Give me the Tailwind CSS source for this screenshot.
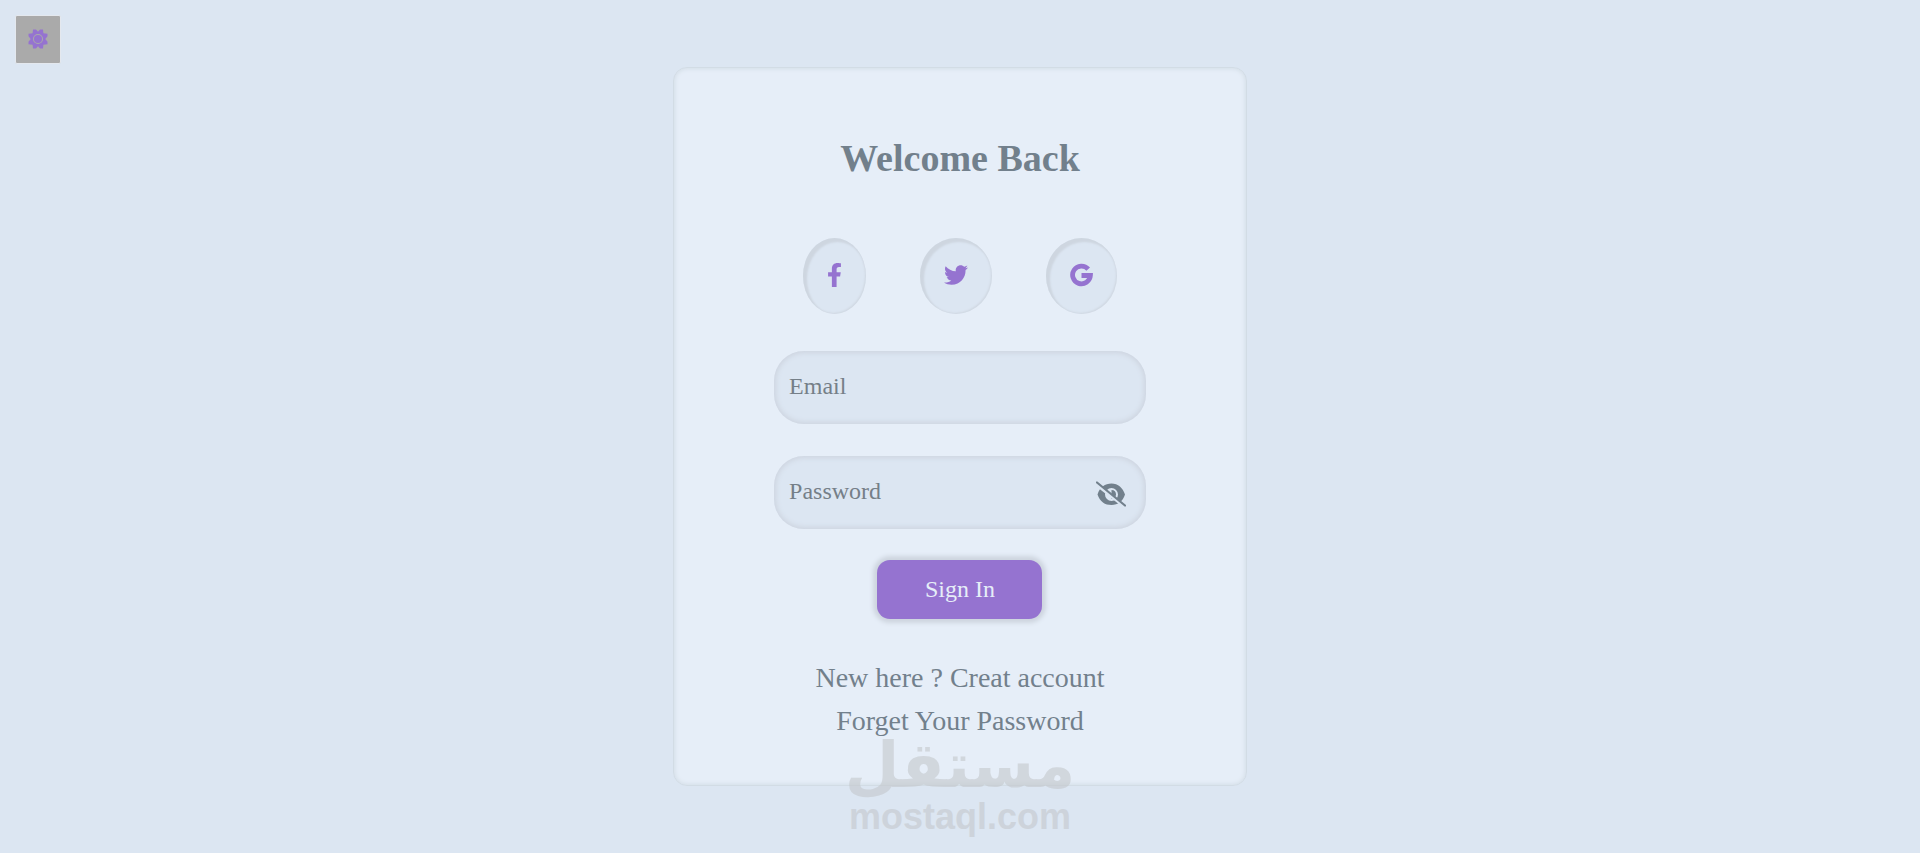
<!DOCTYPE html>
<html lang="en">
<head>
    <meta charset="UTF-8">
    <meta name="viewport" content="width=device-width, initial-scale=1.0">
    <title>Welcome Back</title>
    <script src="https://cdn.jsdelivr.net/npm/@tailwindcss/browser@4"></script>
</head>
<body class="relative min-h-screen flex items-center justify-center bg-[#dce6f2] text-[#72808c] font-['Liberation_Serif',serif]">

    <!-- Theme toggle -->
    <button type="button" aria-label="Toggle theme" class="absolute top-[15px] left-[15px] w-[46px] h-[49px] pb-0.5 flex items-center justify-center bg-[#aaaaaa] border border-[#e4e8ee] rounded-xs text-[#9573d0]">
        <svg class="w-5 h-5" viewBox="0 0 20 20" fill="currentColor">
            <path fill-rule="evenodd" d="M5 .5h3l2 2.300 2-2.300h3l.4 3.700 4.100.6v2.400L17.300 10l2.200 2.800v2.400l-4.100.6-.4 3.700h-3l-2-2.300-2 2.300H5l-.4-3.700-4.100-.6v-2.400L2.700 10 .5 7.200V4.800l4.100-.6zM10 5a5 5 0 1 0 0 10 5 5 0 0 0 0-10z"/>
            <circle cx="10" cy="10" r="4"/>
        </svg>
    </button>

    <!-- Login card -->
    <main class="w-full max-w-[574px] flex flex-col items-center pt-[68px] pb-[43px] my-8 rounded-[14px] bg-[#e6eef8] border border-[#d2dce5] shadow-[inset_0_0_4px_1px_#d4dee7]">
        <h1 class="text-[38px] leading-[44px] font-bold">Welcome Back</h1>

        <!-- Social buttons -->
        <div class="flex gap-[54px] mt-[58px] text-[#9573d0]">
            <a href="#" aria-label="Facebook" class="flex items-center px-6 pb-0.5 h-[76px] rounded-[50%] bg-[#dce6f2] shadow-[inset_3px_3px_2px_1px_#ced6e0,inset_-1px_-1px_2px_#d0d8e2]">
                <svg class="w-[15px] h-6" viewBox="0 0 320 512" fill="currentColor"><path d="M279.140 288l14.220-92.660h-88.910v-60.130c0-25.350 12.420-50.060 52.240-50.060h40.420V6.260S260.430 0 225.360 0c-73.220 0-121.080 44.380-121.080 124.720v70.620H22.890V288h81.390v224h100.170V288z"/></svg>
            </a>
            <a href="#" aria-label="Twitter" class="flex items-center px-6 pb-0.5 h-[76px] rounded-[50%] bg-[#dce6f2] shadow-[inset_3px_3px_2px_1px_#ced6e0,inset_-1px_-1px_2px_#d0d8e2]">
                <svg class="w-6 h-6" viewBox="0 0 512 512" fill="currentColor"><path d="M459.370 151.716c.325 4.548.325 9.097.325 13.645 0 138.720-105.583 298.558-298.558 298.558-59.452 0-114.680-17.219-161.137-47.106 8.447.974 16.568 1.299 25.340 1.299 49.055 0 94.213-16.568 130.274-44.832-46.132-.975-84.792-31.188-98.112-72.772 6.498.974 12.995 1.624 19.818 1.624 9.421 0 18.843-1.300 27.614-3.573-48.081-9.747-84.143-51.980-84.143-102.985v-1.299c13.969 7.797 30.214 12.670 47.431 13.319-28.264-18.843-46.781-51.005-46.781-87.391 0-19.492 5.197-37.360 14.294-52.954 51.655 63.675 129.300 105.258 216.365 109.807-1.624-7.797-2.599-15.918-2.599-24.040 0-57.828 46.782-104.934 104.934-104.934 30.213 0 57.502 12.670 76.670 33.137 23.715-4.548 46.456-13.320 66.599-25.340-7.798 24.366-24.366 44.833-46.132 57.827 21.117-2.273 41.584-8.122 60.426-16.243-14.292 20.791-32.161 39.308-52.628 54.253z"/></svg>
            </a>
            <a href="#" aria-label="Google" class="flex items-center px-6 pb-0.5 h-[76px] rounded-[50%] bg-[#dce6f2] shadow-[inset_3px_3px_2px_1px_#ced6e0,inset_-1px_-1px_2px_#d0d8e2]">
                <svg class="w-[23px] h-6" viewBox="0 0 24 24" fill="none" stroke="currentColor" stroke-width="5"><path d="M19 5.800A9.300 9.300 0 1 0 21.300 12.500H12"/></svg>
            </a>
        </div>

        <form class="w-[65%] flex flex-col items-center mt-[37px]">
            <input type="email" aria-label="Email" placeholder="Email" class="w-full h-[73px] px-[15px] pb-0.5 rounded-[30px] bg-[#dce6f2] text-[24px] placeholder:text-[#757f88] outline-none shadow-[inset_0_0_5px_2px_#ced5e0]">
            <div class="relative w-full mt-8">
                <input type="password" aria-label="Password" placeholder="Password" class="block w-full h-[73px] pl-[15px] pr-16 pb-0.5 rounded-[30px] bg-[#dce6f2] text-[24px] placeholder:text-[#757f88] outline-none shadow-[inset_0_0_5px_2px_#ced5e0]">
                <button type="button" aria-label="Show password" class="absolute right-5 top-6">
                    <svg class="w-[30px] h-7" viewBox="0 0 30 28" fill="currentColor">
                        <path fill-rule="evenodd" d="M1.500 14.500C4 7 9 3.500 15.500 3.500S27 8 29 14.500C27 21 22 25 15.500 25S4 22 1.500 14.500zM15.500 8a6.500 6.500 0 1 0 0 13 6.500 6.500 0 0 0 0-13z"/>
                        <path d="M15.500 10c3 0 4.500 2 4.500 4.500s-2 4.500-4.500 4.500z"/>
                        <path d="M1 5l28 22" fill="none" stroke="#dce6f2" stroke-width="3"/>
                        <path d="M1 2.500l28 23" fill="none" stroke="currentColor" stroke-width="2.200" stroke-linecap="round"/>
                    </svg>
                </button>
            </div>
            <button type="submit" class="w-[165px] h-[59px] pb-0.5 mt-[31px] rounded-[13px] bg-[#9573d0] text-[#e6eef8] text-[24px] shadow-[0_0_4px_4px_#ced5df]">Sign In</button>
        </form>

        <!-- Account links -->
        <div class="flex flex-col items-center mt-[37px] text-[28px] leading-[43px]">
            <a href="#">New here ? Creat account</a>
            <a href="#">Forget Your Password</a>
        </div>
    </main>

    <!-- Watermark -->
    <div class="absolute bottom-4 inset-x-0 flex flex-col items-center text-[#c4c8cc] font-bold opacity-60 pointer-events-none">
        <span lang="ar" dir="rtl" class="font-['DejaVu_Sans',sans-serif] text-[63px] leading-[62px]">مستقل</span>
        <span class="font-['Liberation_Sans',sans-serif] text-[36px] leading-[40px]">mostaql.com</span>
    </div>

</body>
</html>
